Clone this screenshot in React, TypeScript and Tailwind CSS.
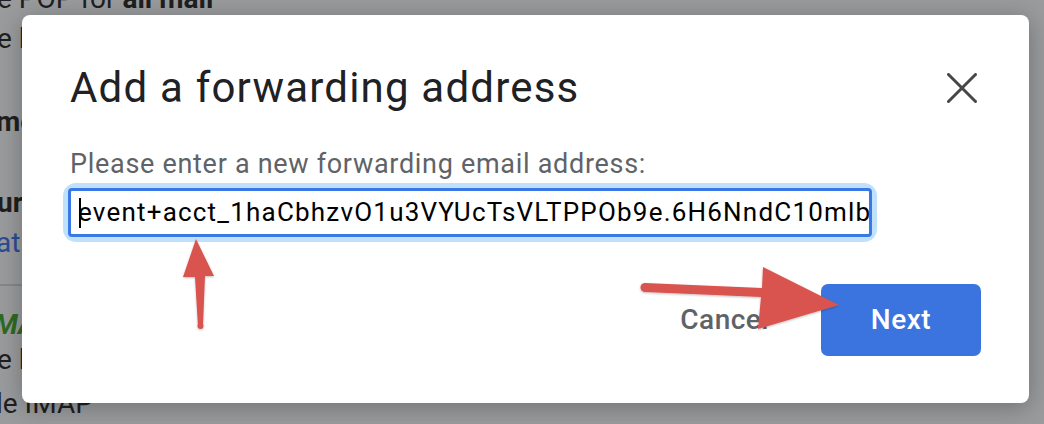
import React from 'react';

const roboto = { fontFamily: 'Roboto, "Liberation Sans", Arial, sans-serif' };

function CloseIcon() {
  return (
    <svg width="30" height="30" viewBox="0 0 30 30" fill="none">
      <path d="M1.5 1.5 L28.5 28.5 M28.5 1.5 L1.5 28.5" stroke="#474747" strokeWidth="3" strokeLinecap="round" />
    </svg>
  );
}

// red annotation arrows drawn on top of the screenshot
function Arrows() {
  return (
    <svg className="pointer-events-none absolute inset-0" width="1044" height="424" viewBox="0 0 1044 424">
      <defs>
        <filter id="arrowShadow" x="-20%" y="-20%" width="140%" height="140%">
          <feDropShadow dx="0" dy="1" stdDeviation="1.2" floodColor="#000" floodOpacity="0.25" />
        </filter>
      </defs>
      <g fill="#d9534f" filter="url(#arrowShadow)">
        {/* up arrow under the input */}
        <polygon points="196,239 214,276 205,276 203,326 198,327 195,277 183,277" />
        <circle cx="200.5" cy="326" r="3" />
        {/* arrow pointing to Next */}
        <polygon points="645,283 762,288 763,267 839,305 758,329 761,297 645,292" />
        <circle cx="645" cy="287.5" r="4.5" />
      </g>
    </svg>
  );
}

export default function App() {
  return (
    <div className="relative h-[424px] w-[1044px] overflow-hidden bg-[#9a9b9d]" style={roboto}>
      {/* dimmed settings page behind the dialog */}
      <div className="text-[28px] leading-[34px] text-[#1f1f1f]">
        <div className="ml-[-3px] mt-[-18px] whitespace-nowrap">
          e POP for <span className="font-bold">all mail</span>
        </div>
        <div className="ml-[-3px] mt-[6px]">e l</div>
        <div className="ml-[-4px] mt-[49px] font-bold">me</div>
        <div className="ml-[-3px] mt-[47px] font-bold">ur</div>
        <div className="ml-[-4px] mt-[6px] text-[#294c96]">ati</div>
        <div className="mt-[24px] h-[2px] w-[40px] bg-[#868789]" />
        <div className="ml-[-6px] mt-[22px] font-bold italic text-[#2d6a22]">MA</div>
        <div className="ml-[-3px] mt-[1px]">e l</div>
        <div className="ml-[-4px] mt-[10px] whitespace-nowrap">le IMAP</div>
      </div>

      {/* dialog */}
      <div className="absolute left-[22px] top-[15px] flex h-[388px] w-[1007px] flex-col rounded-[8px] bg-white px-[48px] pt-[47px] shadow-[0_4px_24px_rgba(0,0,0,0.28)]">
        <div className="flex items-center justify-between">
          <h1 className="text-[42px] leading-[52px] tracking-[1.2px] text-[#202124]">Add a forwarding address</h1>
          <button className="mr-[4px] flex h-[30px] w-[30px] items-center justify-center">
            <CloseIcon />
          </button>
        </div>

        <label className="mt-[34px] text-[27px] leading-[32px] tracking-[0.7px] text-[#5f6368]">
          Please enter a new forwarding email address:
        </label>

        <div className="ml-[-2px] mt-[8px] w-[804px] rounded-[8px] shadow-[0_0_0_5px_#c0e1fb]">
          <div className="flex h-[49px] items-center overflow-hidden rounded-[4px] border-[3px] border-[#3b78e7] pl-[8px] pr-[8px]">
            <div className="flex items-center whitespace-nowrap text-[26px] tracking-[1.2px] text-black">
              <span className="mr-[-3px] inline-block h-[30px] w-[2px] bg-black" />
              event+acct_1haCbhzvO1u3VYUcTsVLTPPOb9e.6H6NndC10mlbQ5xZ@inbound.example.com
            </div>
          </div>
        </div>

        <div className="mt-[47px] flex items-center justify-end">
          <button className="mr-[52px] text-[28px] font-medium tracking-[0.5px] text-[#5f6368]">Cancel</button>
          <button className="h-[72px] w-[160px] rounded-[7px] bg-[#3b74df] text-[28px] font-medium tracking-[0.5px] text-white">
            Next
          </button>
        </div>
      </div>

      <Arrows />
    </div>
  );
}
